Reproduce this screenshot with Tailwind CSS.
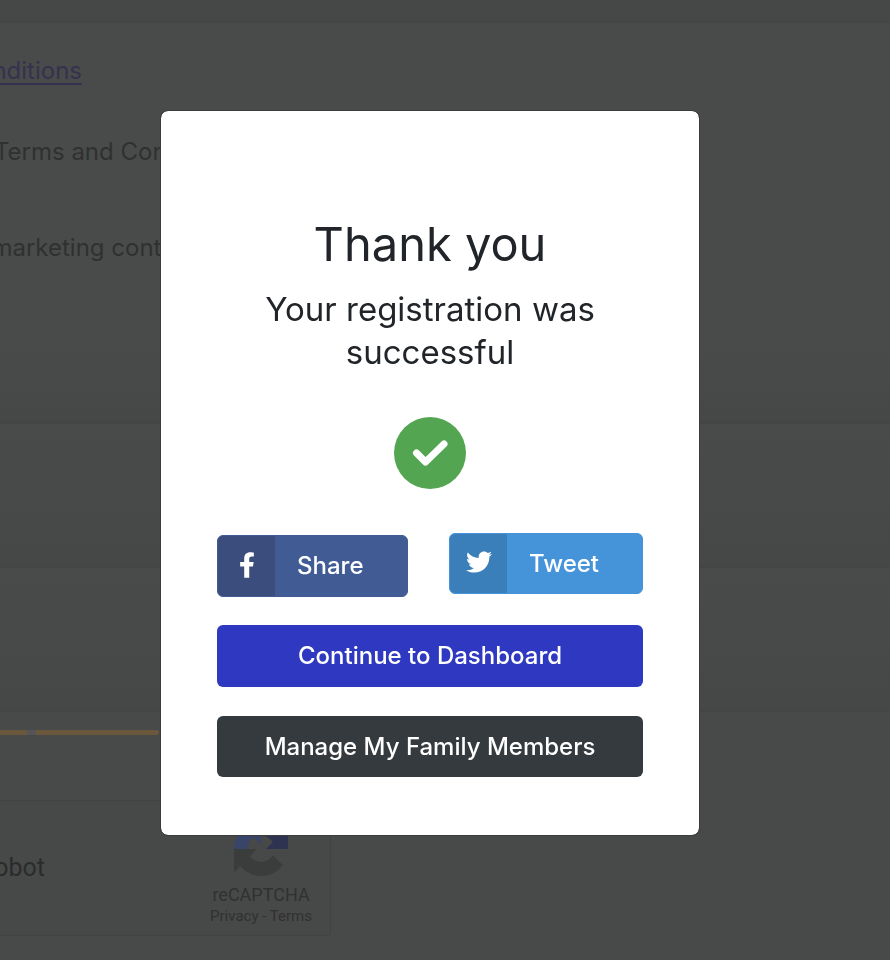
<!DOCTYPE html>
<html lang="en">
<head>
    <meta charset="UTF-8">
    <meta name="viewport" content="width=device-width, initial-scale=1.0">
    <title>Registration successful</title>
    <script src="https://cdn.jsdelivr.net/npm/@tailwindcss/browser@4"></script>
</head>
<body class="min-h-screen overflow-hidden bg-[#484a49] font-['Inter',sans-serif] text-[24px] leading-[32px] text-[#2f3130]">
    <!-- Registration form -->
    <main>
        <div class="h-[20px] bg-[#464847]"></div>
        <section class="h-[401px] border-t-3 border-[#444645] pt-8 whitespace-nowrap bg-linear-to-b from-[#494b4a] from-80% to-[#464847]">
            <div class="flex w-[82px] justify-end">
                <a href="#" class="text-[#35314f] underline decoration-2 underline-offset-4">Terms and Conditions</a>
            </div>
            <p class="mt-[49px] flex w-[242px] justify-end">I accept the Terms and Conditions</p>
            <p class="mt-[64px] flex w-[209px] justify-end">I agree to marketing contacts</p>
        </section>
        <section class="h-36 border-t-3 border-[#444645] bg-linear-to-b from-[#494b4a] to-[#464847]"></section>
        <section class="h-36 border-t-3 border-[#444645] bg-linear-to-b from-[#494b4a] to-[#464847]"></section>
        <section class="border-t-3 border-[#444645] pt-[18px]">
            <div class="flex h-[5px]">
                <div class="w-[27px] bg-[#6b573c]"></div>
                <div class="w-[9px] bg-[#555555]"></div>
                <div class="w-[123px] rounded-r-sm bg-[#6b573c]"></div>
            </div>
            <div class="mt-[65px] flex h-[136px] w-[331px] items-center justify-between rounded-r border border-l-0 border-[#414342] bg-[#474948] font-['Roboto',sans-serif] text-[#2b2b2b]">
                <div class="flex w-[45px] justify-end text-[25px] whitespace-nowrap">I'm not a robot</div>
                <div class="mr-[18px] flex flex-col items-center pt-3 text-[#303130]">
                    <svg class="size-[54px]" viewBox="0 0 64 64">
                        <path fill="#2d3350" d="M64 32V4.500l-7.300 7.300A32 32 0 0 0 32 0v16a16 16 0 0 1 14 8l-8 8z"/>
                        <path fill="#384468" d="M32 0H4.500l7.300 7.300A32 32 0 0 0 0 32h16a16 16 0 0 1 7-14l9 9z"/>
                        <path fill="#3b3d3c" d="M0 32v27.500l7.300-7.300A32 32 0 0 0 58 51L46 39.500a16 16 0 0 1-27 1l8-8.500z"/>
                    </svg>
                    <span class="mt-[9px] text-[18px] leading-[20px]">reCAPTCHA</span>
                    <span class="text-[15px] leading-[22px]"><a href="#">Privacy</a> - <a href="#">Terms</a></span>
                </div>
            </div>
        </section>
    </main>

    <!-- Success dialog -->
    <div class="fixed inset-0 flex items-start justify-center pt-[110px] pr-[30px]">
        <div role="dialog" aria-labelledby="dialog-title" class="w-full max-w-[540px] rounded-lg border border-[#3a3b3a] bg-white bg-clip-padding px-14 pt-[103px] pb-[58px] text-center font-medium text-[#212529]">
            <h1 id="dialog-title" class="text-[47px] leading-[60px] font-normal">Thank you</h1>
            <h2 class="mt-[14px] text-[33px] leading-[43px] font-normal">Your registration was successful</h2>
            <svg class="mx-auto mt-[43px] size-[72px]" viewBox="0 0 72 72" fill="none">
                <circle cx="36" cy="36" r="36" fill="#53a551"/>
                <path d="M22.500 36 31.500 45 50 27" stroke="#fff" stroke-width="7" stroke-linecap="round" stroke-linejoin="round"/>
            </svg>
            <div class="mt-[44px] flex items-start justify-between text-white">
                <button type="button" class="mt-[2px] flex h-[62px] w-[191px] overflow-hidden rounded-md border border-[#415b94] bg-[#415b94]">
                    <span class="flex h-full w-[57px] items-center justify-center bg-[#3a4d7d] pb-[3px]">
                        <svg class="h-[26px] w-[16px]" viewBox="0 0 320 512" fill="currentColor">
                            <path d="M279.14 288l14.22-92.66h-88.91v-60.13c0-25.35 12.42-50.06 52.24-50.06h40.42V6.26S260.43 0 225.36 0c-73.22 0-121.08 44.38-121.08 124.72v70.62H22.89V288h81.39v224h100.17V288z"/>
                        </svg>
                    </span>
                    <span class="pl-[22px] leading-[60px]">Share</span>
                </button>
                <button type="button" class="flex h-[61px] w-[194px] overflow-hidden rounded-md border border-[#4594da] bg-[#4594da]">
                    <span class="flex h-full w-[57px] items-center justify-center bg-[#3b7fba] pb-[3px]">
                        <svg class="size-[26px]" viewBox="0 0 512 512" fill="currentColor">
                            <path d="M459.37 151.716c.325 4.548.325 9.097.325 13.645 0 138.72-105.583 298.558-298.558 298.558-59.452 0-114.68-17.219-161.137-47.106 8.447.974 16.568 1.299 25.34 1.299 49.055 0 94.213-16.568 130.274-44.832-46.132-.975-84.792-31.188-98.112-72.772 6.498.974 12.995 1.624 19.818 1.624 9.421 0 18.843-1.3 27.614-3.573-48.081-9.747-84.143-51.98-84.143-102.985v-1.299c13.969 7.797 30.214 12.67 47.431 13.319-28.264-18.843-46.781-51.005-46.781-87.391 0-19.492 5.197-37.36 14.294-52.954 51.655 63.675 129.3 105.258 216.365 109.807-1.624-7.797-2.599-15.918-2.599-24.04 0-57.828 46.782-104.934 104.934-104.934 30.213 0 57.502 12.67 76.67 33.137 23.715-4.548 46.456-13.32 66.599-25.34-7.798 24.366-24.366 44.833-46.132 57.827 21.117-2.273 41.584-8.122 60.426-16.243-14.292 20.791-32.161 39.308-52.628 54.253z"/>
                        </svg>
                    </span>
                    <span class="pl-[22px] leading-[60px]">Tweet</span>
                </button>
            </div>
            <button type="button" class="mt-[28px] block h-[62px] w-full rounded-md bg-[#2f38c0] text-white">Continue to Dashboard</button>
            <button type="button" class="mt-[29px] block h-[61px] w-full rounded-md bg-[#353a3e] text-white">Manage My Family Members</button>
        </div>
    </div>
</body>
</html>
